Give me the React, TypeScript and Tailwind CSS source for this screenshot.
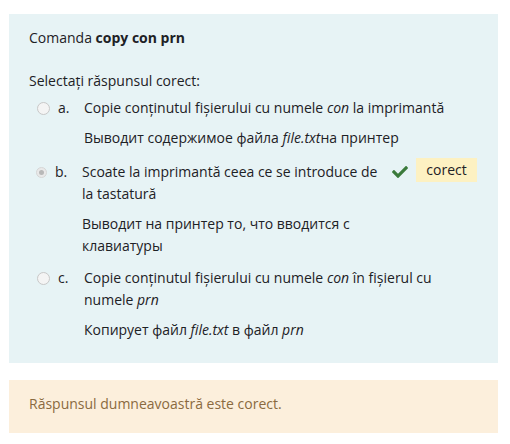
import React from "react";

function Radio({ checked }: { checked?: boolean }) {
  if (checked) {
    return (
      <span className="mt-[5.5px] ml-[7px] mr-[8px] flex h-[11px] w-[11px] shrink-0 items-center justify-center rounded-full border border-[#d6d6d6] bg-[#e9e9e9]">
        <span className="h-[5px] w-[5px] rounded-full bg-[#b8b8b8]" />
      </span>
    );
  }
  return (
    <span className="mt-[4.5px] ml-[8px] mr-[8px] block h-[13px] w-[13px] shrink-0 rounded-full border border-[#c8c8c8] bg-[#f4f4f4]" />
  );
}

export default function App() {
  return (
    <div
      className="w-[510px] h-[444px] bg-white pt-[14px] text-[14px] leading-[22px] text-[#1d2125]"
      style={{ fontFamily: '"Open Sans", "Noto Sans", sans-serif' }}
    >
      <div className="mx-[9px] w-[489px] bg-[#e7f3f5] pl-[20px] pr-[20px] pt-[13px] pb-[22px]">
        <div>
          Comanda <b className="font-bold">copy con prn</b>
        </div>
        <div className="mt-[21px]">Selectați răspunsul corect:</div>

        <div className="mt-[5px] flex items-start">
          <Radio />
          <span className="w-[26px] shrink-0">a.</span>
          <div className="flex-1">
            <div>
              Copie conținutul fișierului cu numele <i>con</i> la imprimantă
            </div>
            <div className="mt-[8px]">
              Выводит содержимое файла <i>file.txt</i>на принтер
            </div>
          </div>
        </div>

        <div className="mt-[12px] flex items-start">
          <Radio checked />
          <span className="w-[27px] shrink-0">b.</span>
          <div className="w-[304px] shrink-0">
            <div>Scoate la imprimantă ceea ce se introduce de la tastatură</div>
            <div className="mt-[8px]">
              Выводит на принтер то, что вводится с клавиатуры
            </div>
          </div>
          <svg
            className="ml-[6px] mt-[3px] shrink-0"
            width="16"
            height="14"
            viewBox="0 0 512 448"
          >
            <path
              fill="#3b7a3b"
              d="M173.9 439.4l-166.4-166.4c-10-10-10-26.2 0-36.2l36.2-36.2c10-10 26.2-10 36.2 0L192 312.7 432.1 72.6c10-10 26.2-10 36.2 0l36.2 36.2c10 10 10 26.2 0 36.2l-294.4 294.4c-10 10-26.2 10-36.2 0z"
            />
          </svg>
          <span className="ml-[8px] mt-[-3px] flex h-[24px] w-[61px] shrink-0 items-center justify-center bg-[#fdf1c2]">
            corect
          </span>
        </div>

        <div className="mt-[10px] flex items-start">
          <Radio />
          <span className="w-[26px] shrink-0">c.</span>
          <div className="flex-1">
            <div>
              Copie conținutul fișierului cu numele <i>con</i> în fișierul cu
              numele <i>prn</i>
            </div>
            <div className="mt-[8px]">
              Копирует файл <i>file.txt</i> в файл <i>prn</i>
            </div>
          </div>
        </div>
      </div>

      <div className="mx-[9px] mt-[17px] h-[53px] w-[489px] bg-[#fcefdc] pl-[20px] pt-[13px] text-[#8a6a40]">
        Răspunsul dumneavoastră este corect.
      </div>
    </div>
  );
}
